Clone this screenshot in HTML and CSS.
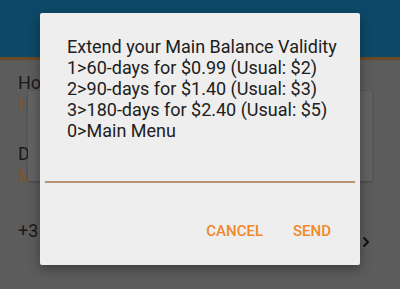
FILE: index.html
```html
<!DOCTYPE html>
<html>
<head>
<meta charset="utf-8">
<link rel="stylesheet" href="styles.css">
</head>
<body>
<div class="screen">
  <div class="topbar"></div>
  <div class="content">
    <div class="label dark first">Ho</div>
    <div class="block">
      <div class="labels">
        <div class="label orange">H</div>
        <div class="label dark d">D</div>
        <div class="label orange">M</div>
      </div>
      <div class="card"></div>
    </div>
    <div class="row">
      <span class="label dark">+3</span>
      <svg class="chev" width="8" height="12" viewBox="0 0 8 12"><path d="M1.5 1.5 L6 6 L1.5 10.5" fill="none" stroke="#111" stroke-width="2"/></svg>
    </div>
  </div>
  <div class="dialog">
    <div class="msg">Extend your Main Balance Validity<br>1&gt;60-days for $0.99 (Usual: $2)<br>2&gt;90-days for $1.40 (Usual: $3)<br>3&gt;180-days for $2.40 (Usual: $5)<br>0&gt;Main Menu</div>
    <div class="input"></div>
    <div class="actions">
      <span class="btn">CANCEL</span>
      <span class="btn">SEND</span>
    </div>
  </div>
</div>
</body>
</html>
```
FILE: styles.css
```css
html, body {
  margin: 0;
  padding: 0;
}
body {
  width: 400px;
  height: 289px;
  overflow: hidden;
  background: #5c5c5c;
  font-family: Roboto, "Noto Sans", sans-serif;
}
.screen {
  position: relative;
  width: 400px;
  height: 289px;
}
.topbar {
  height: 57px;
  background: #0c4968;
  border-bottom: 3px solid #6a4a25;
}
.content {
  padding: 0 0 0 18px;
}
.label {
  font-size: 18px;
  line-height: 22px;
  white-space: nowrap;
}
.dark { color: #1a1a1a; }
.orange { color: #7d5630; }
.first { margin-top: 12px; }
.block {
  display: flex;
  margin-top: -1px;
}
.labels {
  width: 10px;
}
.labels .d { margin-top: 28px; }
.card {
  flex: 1;
  margin-right: 28px;
  margin-top: -2px;
  height: 90px;
  background: #626262;
  border-radius: 2px;
  box-shadow: 0 1px 3px rgba(0,0,0,0.25);
}
.row {
  display: flex;
  align-items: center;
  justify-content: space-between;
  margin-top: 27px;
  padding-right: 30px;
}
.chev { margin-top: 22px; }
.dialog {
  position: absolute;
  left: 40px;
  top: 13px;
  width: 320px;
  height: 252px;
  background: #eeeeee;
  border-radius: 2px;
  box-shadow: 0 4px 12px rgba(0,0,0,0.35);
  box-sizing: border-box;
  padding: 23px 0 0 0;
}
.msg {
  padding-left: 27px;
  font-size: 18px;
  line-height: 21px;
  color: #202020;
}
.input {
  margin: 40px 5px 0 5px;
  height: 2px;
  background: #b79474;
}
.actions {
  display: flex;
  justify-content: flex-end;
  gap: 30px;
  padding: 39px 29px 0 0;
}
.btn {
  font-size: 15px;
  font-weight: 500;
  color: #f0882a;
  line-height: 18px;
}
```
